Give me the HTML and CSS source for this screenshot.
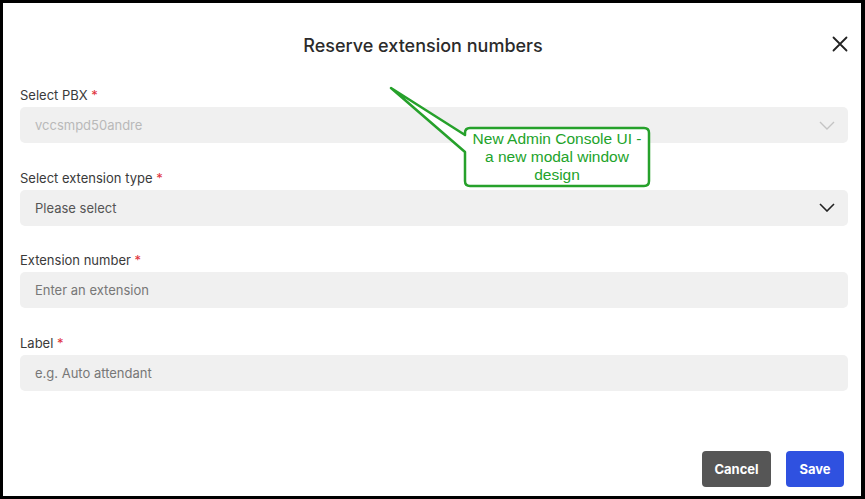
FILE: index.html
```html
<!DOCTYPE html>
<html lang="en">
<head>
<meta charset="utf-8">
<title>Reserve extension numbers</title>
<link rel="stylesheet" href="styles.css">
</head>
<body>
<div class="modal">
  <header class="modal-header">
    <h1 class="modal-title">Reserve extension numbers</h1>
    <button class="close-btn" aria-label="Close">
      <svg width="16" height="16" viewBox="0 0 16 16"><path d="M1.5 1.5 L14.5 14.5 M14.5 1.5 L1.5 14.5" stroke="#222" stroke-width="1.8" fill="none" stroke-linecap="round"/></svg>
    </button>
  </header>
  <div class="modal-body">
    <div class="field">
      <label class="field-label">Select PBX <span class="req">*</span></label>
      <div class="control control-disabled">
        <span class="value-disabled">vccsmpd50andre</span>
        <svg class="chev" width="16" height="9" viewBox="0 0 16 9"><path d="M1 1 L8 8 L15 1" stroke="#c4c4c4" stroke-width="1.4" fill="none"/></svg>
      </div>
    </div>
    <div class="field">
      <label class="field-label">Select extension type <span class="req">*</span></label>
      <div class="control">
        <span class="value-select">Please select</span>
        <svg class="chev" width="16" height="9" viewBox="0 0 16 9"><path d="M1 1 L8 8 L15 1" stroke="#222" stroke-width="1.6" fill="none"/></svg>
      </div>
    </div>
    <div class="field">
      <label class="field-label">Extension number <span class="req">*</span></label>
      <div class="control">
        <span class="placeholder">Enter an extension</span>
      </div>
    </div>
    <div class="field">
      <label class="field-label">Label <span class="req">*</span></label>
      <div class="control">
        <span class="placeholder">e.g. Auto attendant</span>
      </div>
    </div>
  </div>
  <footer class="modal-footer">
    <button class="btn btn-cancel">Cancel</button>
    <button class="btn btn-save">Save</button>
  </footer>
</div>
<svg class="callout-shape" width="865" height="499" viewBox="0 0 865 499">
  <path d="M470 128 H644 Q649 128 649 133 V181 Q649 186 644 186 H470 Q465 186 465 181 V152 L391 88 L465 135 V133 Q465 128 470 128 Z" fill="#fff" stroke="#26a12b" stroke-width="2.5" stroke-linejoin="round"/>
</svg>
<div class="callout-text">New Admin Console UI -<br>a new modal window<br>design</div>
</body>
</html>
```
FILE: styles.css
```css
html, body {
  margin: 0;
  padding: 0;
}
body {
  background: #000;
  width: 865px;
  height: 499px;
  overflow: hidden;
  position: relative;
  font-family: Inter, "Noto Sans", sans-serif;
}
.modal {
  margin: 3px 4px 3px 3px;
  height: 493px;
  background: #fff;
  display: flex;
  flex-direction: column;
  padding: 0 13px 0 17px;
  box-sizing: border-box;
}
.modal-header {
  height: 84px;
  display: flex;
  align-items: center;
  flex-shrink: 0;
}
.modal-title {
  flex: 1;
  margin: 0;
  text-align: center;
  font-size: 18px;
  font-weight: 500;
  color: #2b2b2b;
}
.close-btn {
  width: 22px;
  height: 16px;
  padding: 0;
  border: 0;
  background: none;
  display: flex;
  justify-content: flex-end;
  margin-top: -2px;
}
.modal-body {
  display: flex;
  flex-direction: column;
  gap: 26.5px;
}
.field {
  display: flex;
  flex-direction: column;
  gap: 4px;
}
.field-label {
  font-size: 13px;
  line-height: 16px;
  color: #3a3a3a;
}
.req {
  color: #e0303a;
}
.control {
  height: 36px;
  background: #f0f0f0;
  border-radius: 5px;
  display: flex;
  align-items: center;
  justify-content: space-between;
  padding: 0 13px 0 15px;
  font-size: 13px;
}
.value-disabled {
  color: #b9b9b9;
}
.value-select {
  color: #555;
}
.placeholder {
  color: #777;
}
.modal-footer {
  margin-top: auto;
  display: flex;
  justify-content: flex-end;
  gap: 15px;
  padding: 0 4px 9px 0;
}
.btn {
  height: 36px;
  border: 0;
  border-radius: 4px;
  color: #fff;
  font-family: Inter, "Noto Sans", sans-serif;
  font-size: 13px;
  font-weight: 700;
  padding: 0;
}
.btn-cancel {
  width: 69px;
  background: #565656;
}
.btn-save {
  width: 58px;
  background: #2f51e0;
}
.callout-shape {
  position: absolute;
  left: 0;
  top: 0;
  pointer-events: none;
}
.callout-text {
  position: absolute;
  left: 465px;
  top: 130px;
  width: 184px;
  text-align: center;
  font-family: "Liberation Sans", Arial, sans-serif;
  font-size: 15.5px;
  line-height: 18px;
  color: #22a32a;
}
```
